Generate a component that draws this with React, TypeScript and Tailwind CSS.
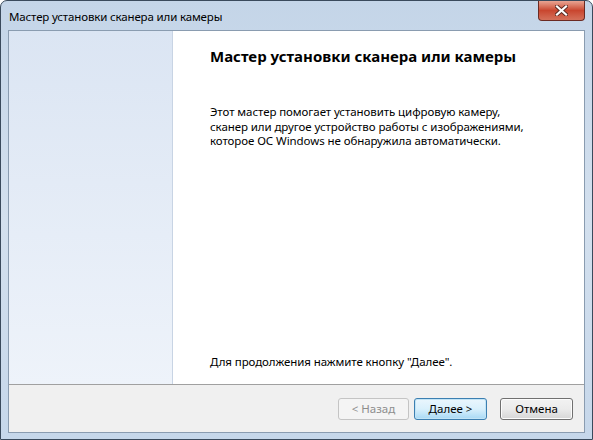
import React from "react";

export default function App() {
  const font = { fontFamily: '"Segoe UI", "Noto Sans", "Open Sans", sans-serif' };
  return (
    <div
      className="w-[593px] h-[440px] bg-white overflow-hidden relative"
      style={font}
    >
      <div className="w-[593px] h-[440px] rounded-t-[7px] border border-[#3a4a5c] bg-gradient-to-b from-[#c4d5e8] via-[#d3e0ee] to-[#c6d7ea] flex flex-col px-[7px] pb-[6px]">
        {/* Title bar */}
        <div className="h-[29px] flex items-start justify-between shrink-0">
          <div className="pt-[8px] pl-[1px] text-[11.5px] tracking-[-0.15px] leading-[16px] text-black">
            Мастер установки сканера или камеры
          </div>
          <div className="w-[47px] h-[20px] rounded-b-[4px] border border-[#6b2a22] border-t-0 bg-gradient-to-b from-[#e8a493] via-[#c9462f] to-[#d4705a] flex items-center justify-center">
            <svg width="13" height="11" viewBox="0 0 13 11">
              <path
                d="M2 1.5 L11 9.5 M11 1.5 L2 9.5"
                stroke="#5a2a22"
                strokeWidth="4"
                strokeLinecap="square"
              />
              <path
                d="M2 1.5 L11 9.5 M11 1.5 L2 9.5"
                stroke="#ffffff"
                strokeWidth="2.2"
                strokeLinecap="square"
              />
            </svg>
          </div>
        </div>
        {/* Client */}
        <div className="flex-1 flex flex-col border border-[#8a9cb0] bg-[#f0f0f0]">
          <div className="h-[354px] flex border-b border-[#a0a0a0] shrink-0">
            <div className="w-[164px] bg-gradient-to-b from-[#dbe5f3] to-[#eef3fa] border-r border-[#c8d4e4]" />
            <div className="flex-1 bg-white pl-[37px] pt-[14px] flex flex-col">
              <div className="text-[15px] leading-[22px] font-bold text-black">
                Мастер установки сканера или камеры
              </div>
              <div className="mt-[38px] text-[11.5px] tracking-[-0.08px] leading-[14.5px] text-black">
                <div>Этот мастер помогает установить цифровую камеру,</div>
                <div>сканер или другое устройство работы с изображениями,</div>
                <div>которое ОС Windows не обнаружила автоматически.</div>
              </div>
              <div className="mt-auto mb-[15px] text-[11.5px] tracking-[-0.08px] leading-[15px] text-black">
                Для продолжения нажмите кнопку "Далее".
              </div>
            </div>
          </div>
          <div className="flex-1 flex items-center justify-end pr-[11px] gap-[5px]">
            <button className="w-[71px] h-[22px] rounded-[3px] border border-[#c4c4c4] bg-[#f4f4f4] text-[11.5px] text-[#8d8d8d] leading-none">
              &lt; Назад
            </button>
            <button className="w-[73px] h-[22px] rounded-[3px] border border-[#3c7fb1] bg-gradient-to-b from-[#eaf6fd] via-[#d9f0fc] to-[#a7d9f5] text-[11.5px] text-black leading-none shadow-[inset_0_0_0_1px_#c2e4f6]">
              Далее &gt;
            </button>
            <button className="ml-[8px] w-[73px] h-[22px] rounded-[3px] border border-[#707070] bg-gradient-to-b from-[#f2f2f2] via-[#ebebeb] to-[#d6d6d6] text-[11.5px] text-black leading-none shadow-[inset_0_0_0_1px_#fcfcfc]">
              Отмена
            </button>
          </div>
        </div>
      </div>
    </div>
  );
}
